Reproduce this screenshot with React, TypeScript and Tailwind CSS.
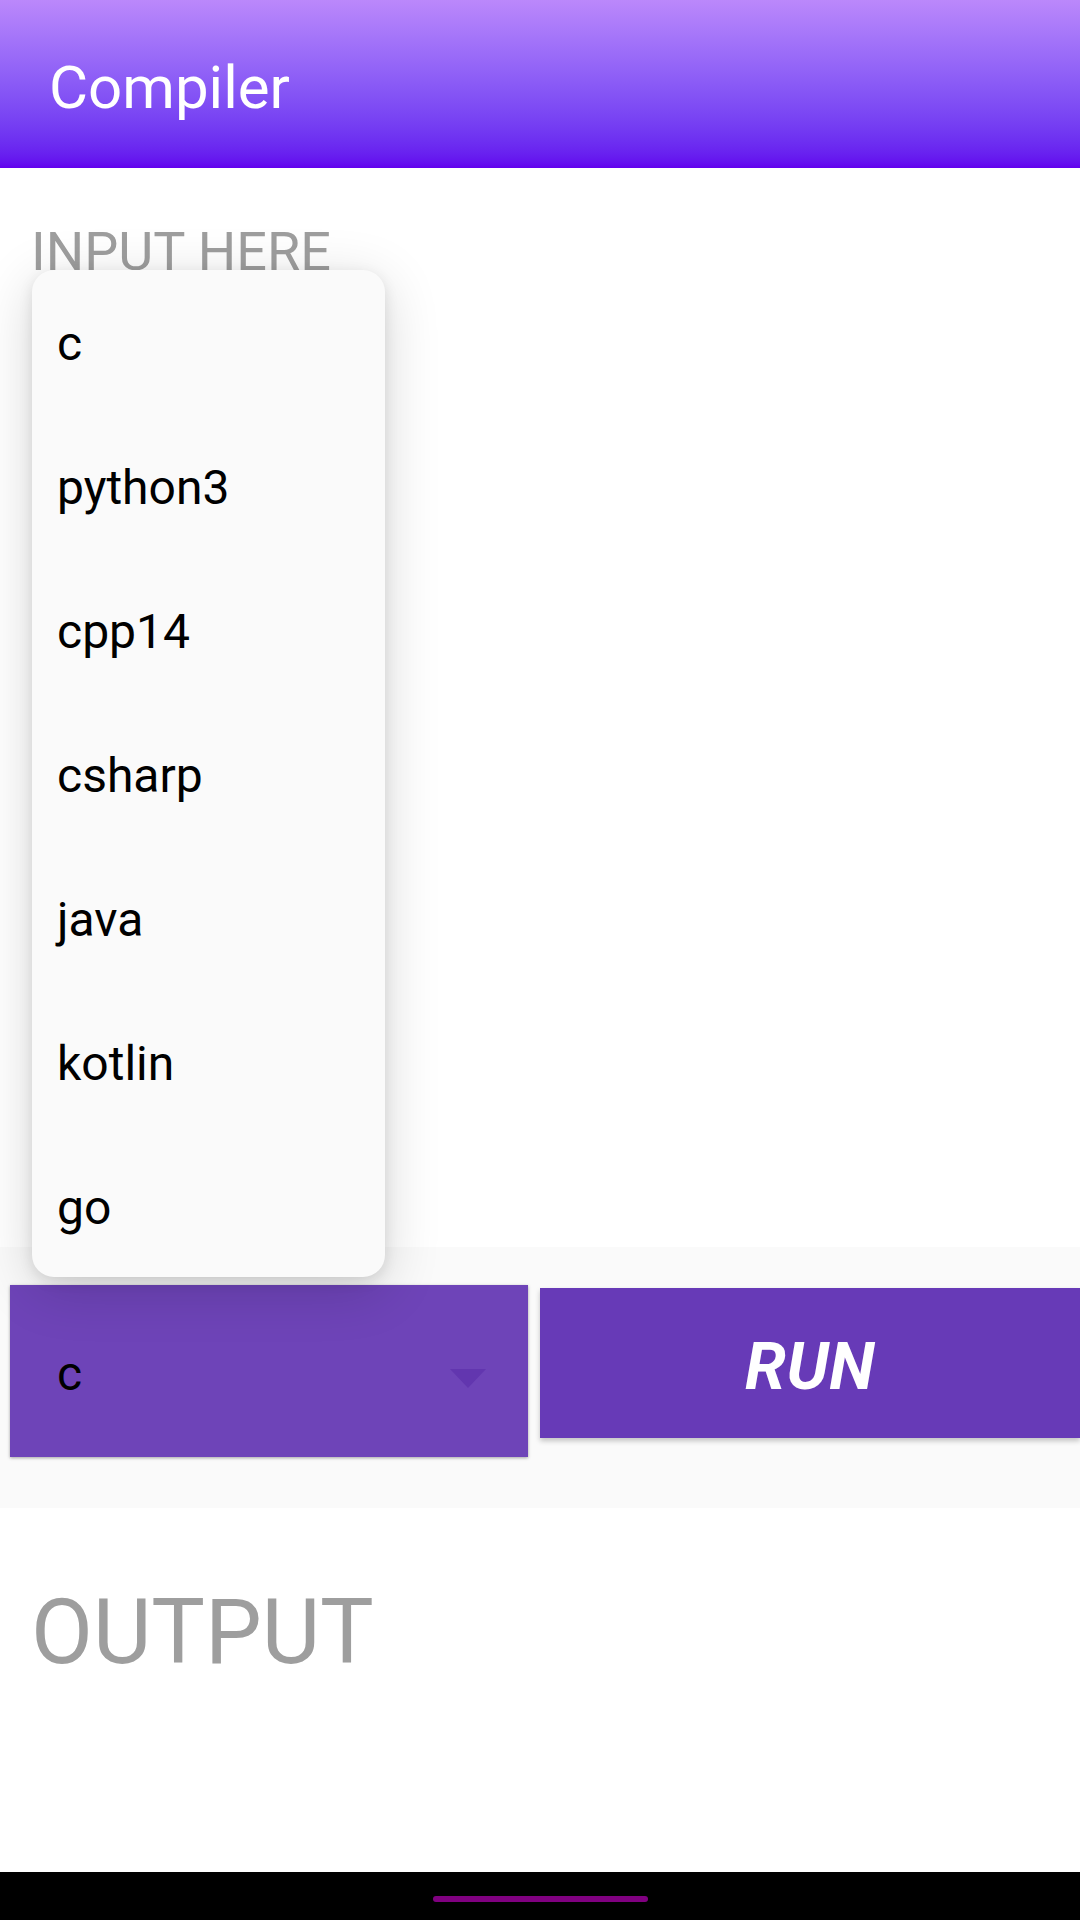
import React from 'react';

const LANGUAGES = ['c', 'python3', 'cpp14', 'csharp', 'java', 'kotlin', 'go'];

const ROBOTO = "font-['Roboto','Liberation_Sans',sans-serif]";

const LanguageMenu = () => (
  <div className="absolute left-[32px] top-[270px] z-20 w-[353px] h-[1007px] bg-[#fafafa] rounded-[22px] shadow-[0_12px_56px_rgba(0,0,0,0.16),0_4px_14px_rgba(0,0,0,0.1)] flex flex-col">
    {LANGUAGES.map((lang) => (
      <div key={lang} className="h-[144px] flex items-center pl-[25px] pt-[5px] text-[48px] leading-none text-black">
        {lang}
      </div>
    ))}
  </div>
);

const App: React.FC = () => {
  return (
    <div className={`relative w-[1080px] h-[1920px] flex flex-col bg-white overflow-hidden ${ROBOTO}`}>
      {/* toolbar */}
      <header className="h-[168px] shrink-0 bg-gradient-to-b from-[#bb88fb] to-[#6200ee] pl-[49px] pt-[58px]">
        <h1 className="text-[60px] leading-none text-white font-normal">Compiler</h1>
      </header>

      {/* input */}
      <div className="h-[1079px] shrink-0 bg-white pl-[31px] pt-[57px]">
        <div className="text-[54px] leading-none text-[#9e9e9e]">INPUT HERE</div>
      </div>

      {/* controls */}
      <div className="h-[261px] shrink-0 bg-[#fafafa] flex items-start pt-[38px] pl-[10px] gap-[12px]">
        <div className="relative w-[518px] h-[172px] bg-[#6e44b8] shadow-[0_1px_3px_rgba(0,0,0,0.35)] flex items-center pl-[47px] pr-[42px] justify-between">
          <span className="text-[48px] leading-none text-black mt-[6px]">c</span>
          <svg width="36" height="19" viewBox="0 0 36 19" className="mt-[14px]">
            <polygon points="0,0 36,0 18,19" fill="#6236af" />
          </svg>
        </div>
        <button className="mt-[3px] flex-1 h-[150px] bg-[#673ab7] shadow-[0_3px_5px_rgba(0,0,0,0.22)] flex items-center justify-center">
          <span className="text-[66px] leading-none font-bold italic text-white tracking-[0.5px] mt-[8px]">RUN</span>
        </button>
      </div>

      {/* output */}
      <div className="flex-1 bg-white pl-[31px] pt-[80px]">
        <div className="text-[90px] leading-none text-[#9e9e9e]">OUTPUT</div>
      </div>

      {/* system nav bar */}
      <div className="h-[48px] shrink-0 bg-black flex justify-center pt-[24px]">
        <div className="w-[215px] h-[6px] rounded-full bg-[#800080]" />
      </div>

      <LanguageMenu />
    </div>
  );
};

export default App;
